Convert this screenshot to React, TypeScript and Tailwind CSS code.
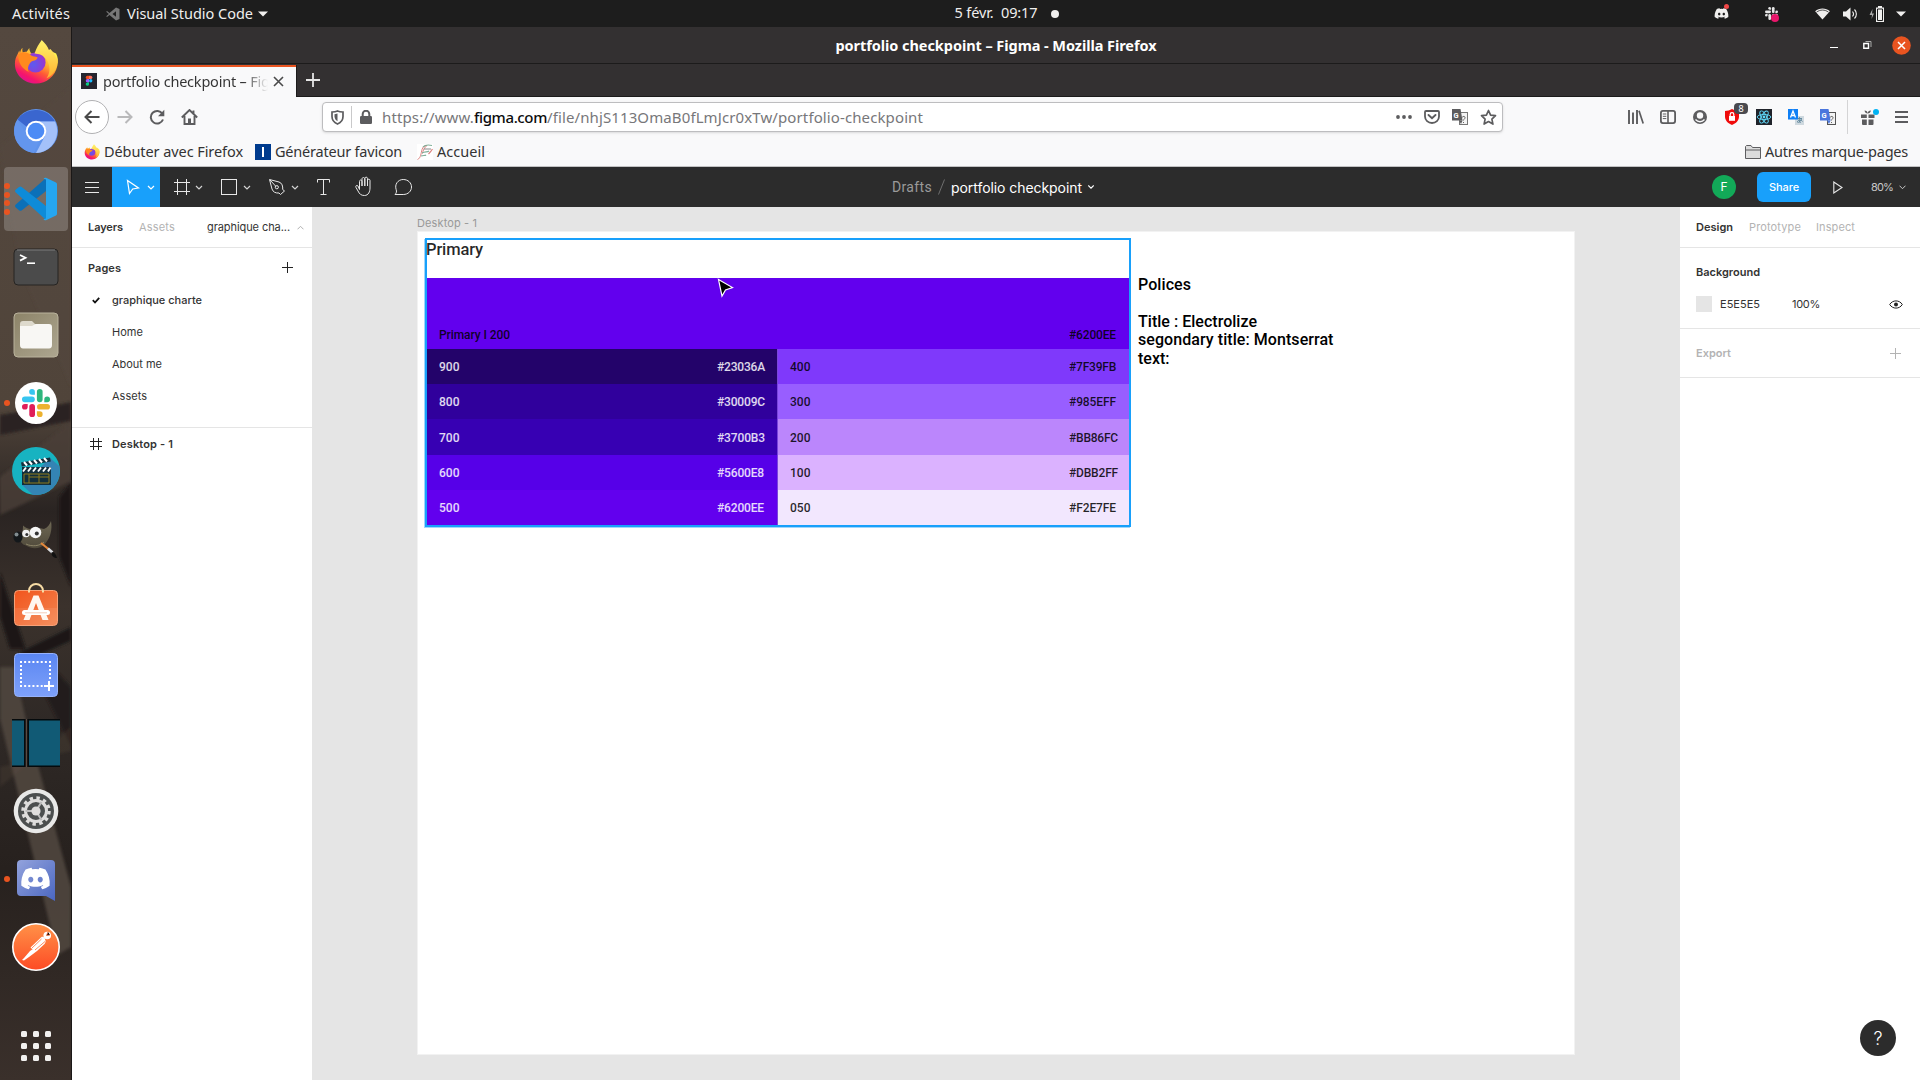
import { useLayoutEffect, useRef, useState } from "react";
import type { ReactNode } from "react";
import { FaDiscord } from "react-icons/fa";

/* Single line of text whose tracking is adjusted so that it spans a given width. */
function Fit({ w, className = "", children }: { w: number; className?: string; children: string }) {
  const ref = useRef<HTMLSpanElement>(null);
  const [spacing, setSpacing] = useState(0);
  useLayoutEffect(() => {
    if (ref.current) {
      const natural = ref.current.getBoundingClientRect().width;
      setSpacing((w - natural) / children.length);
    }
  }, [w, children]);
  return (
    <span ref={ref} className={`inline-block shrink-0 whitespace-pre ${className}`} style={{ letterSpacing: spacing }}>
      {children}
    </span>
  );
}

function Cell({ className = "", children }: { className?: string; children?: ReactNode }) {
  return <div className={`flex shrink-0 items-center justify-center ${className}`}>{children}</div>;
}

/* ---------- Dock icons ---------- */

function FirefoxIcon({ size, id }: { size: number; id: string }) {
  return (
    <svg width={size} height={size} viewBox="0 0 48 48">
      <defs>
        <linearGradient id={`${id}a`} x1="0.8" y1="0.1" x2="0.25" y2="0.95">
          <stop offset="0" stopColor="#fff44f" />
          <stop offset="0.35" stopColor="#ffb02e" />
          <stop offset="0.6" stopColor="#ff5a36" />
          <stop offset="0.85" stopColor="#f5156c" />
          <stop offset="1" stopColor="#e0128d" />
        </linearGradient>
        <radialGradient id={`${id}b`} cx="0.4" cy="0.6" r="0.6">
          <stop offset="0" stopColor="#5b5bf0" />
          <stop offset="1" stopColor="#9a35cf" />
        </radialGradient>
        <linearGradient id={`${id}c`} x1="0" y1="0" x2="0" y2="1">
          <stop offset="0" stopColor="#fff36b" />
          <stop offset="1" stopColor="#ffb22f" />
        </linearGradient>
      </defs>
      <path d="M10 9c-.5 2-.3 3.500 .3 5 1-.6 2.500-.8 4-.6L17 9.500c0 2 .8 4 2 5.500L38 12l7 3c2 4 2.500 8 1.300 13C44 39 35 46.500 24 46.500S2 38.500 2 26c0-4 1-7 3-10.500L6.500 12l.8 2.500C7.800 12 8.500 10.500 10 9Z" fill={`url(#${id}a)`} />
      <circle cx="23.500" cy="24.500" r="10.500" fill={`url(#${id}b)`} />
      <path d="M30 1c3.500 3.500 6 6.500 7.500 10.500l1.500-1c3 3 5 6 6 10.500l1-.8C47 30 42.500 38 35 41c3.500-5 4-10.500 1.500-17-1.300-3.500-5-7-9-8l-5-1c2-6 4.500-10 7.500-14Z" fill={`url(#${id}c)`} />
      <path d="M5.500 16c5-3.500 10-2.500 14 1.500 1.500 1 4 .8 6 1.500.3 2-2.500 3.500-5 4-1 0-2 1-3 2.500-2 2.500-2.500 6-1 9C9 31 5 24 5.500 16Z" fill="#ff8a1e" />
    </svg>
  );
}

function ChromiumIcon() {
  return (
    <svg width="44" height="44" viewBox="0 0 44 44">
      <circle cx="22" cy="22" r="22" fill="#5f93ec" />
      <path d="M3.500 10.500A22 22 0 0 1 41 12.500H22a10 10 0 0 0-9 5.500Z" fill="#3a66cf" />
      <path d="M22 12.500h19A22 22 0 0 1 22 44l9-17a10 10 0 0 0-9-14.500Z" fill="#a4c1f9" />
      <path d="m3.500 10.500 9.800 16.500A10 10 0 0 0 22 32l3.500-.5L20 44A22 22 0 0 1 3.500 10.500Z" fill="#6396ee" />
      <circle cx="22" cy="22" r="10.300" fill="#fff" />
      <circle cx="22" cy="22" r="8.300" fill="#4c8bf5" />
    </svg>
  );
}

function VSCodeIcon() {
  return (
    <svg width="44" height="44" viewBox="0 0 44 44">
      <path d="M32 1 1.800 27.500c-1 .9-1 2 0 2.900L5 33.300c.8.700 1.800.7 2.600.1L32 14Z" fill="#0b70b8" />
      <path d="M32 43 1.800 15.500c-1-.9-1-2 0-2.900L5 10c.8-.7 1.800-.7 2.600 0L32 29Z" fill="#0e8bd8" />
      <path d="M32 .8 42 5.500c.7.400 1 .9 1 1.700v29.600c0 .8-.3 1.300-1 1.700L32 43.200c-1 .3-2-.2-2.500-1l2.500-.7V2.500L29.500 1.800c.5-.8 1.500-1.300 2.500-1Z" fill="#25a6f0" />
    </svg>
  );
}

function TerminalIcon() {
  return (
    <svg width="46" height="38" viewBox="0 0 46 38">
      <rect x="1" y="1" width="44" height="36" rx="4" fill="#4b4b4b" stroke="#262422" />
      <path d="M4 2h38" stroke="#7d7d7d" />
      <path d="m7 7 5.500 2.800L7 12.600" fill="none" stroke="#fff" strokeWidth="1.800" />
      <path d="M14 15.200h8" stroke="#fff" strokeWidth="1.600" />
    </svg>
  );
}

function FilesIcon() {
  return (
    <svg width="46" height="46" viewBox="0 0 46 46">
      <defs>
        <linearGradient id="fil" x1="0" y1="0" x2="1" y2="1">
          <stop offset="0" stopColor="#8c8368" />
          <stop offset="1" stopColor="#ada690" />
        </linearGradient>
      </defs>
      <rect x="1" y="1" width="44" height="44" rx="4" fill="url(#fil)" stroke="#b9b29c" />
      <path d="M7 12c0-2 1-3 3-3h9l4 4h10v10H7Z" fill="#dedacd" />
      <path d="M7 14h12l3.500-2H36c2 0 3 1 3 3v18c0 2-1 3.500-3 3.500H10c-2 0-3-1.500-3-3.500Z" fill="#f8f7f4" />
    </svg>
  );
}

function SlackMark({ size, colors }: { size: number; colors: [string, string, string, string] }) {
  const [b, g, y, r] = colors;
  return (
    <svg width={size} height={size} viewBox="0 0 28 28">
      <g fill={b}>
        <rect x="0" y="7.500" width="12.800" height="5.700" rx="2.850" />
        <path d="M10 0a2.850 2.850 0 0 1 2.850 2.850V5.700H10A2.850 2.850 0 0 1 10 0Z" />
      </g>
      <g fill={g}>
        <rect x="14.900" y="0" width="5.700" height="13.200" rx="2.850" />
        <path d="M28 10.300a2.850 2.850 0 0 1-2.850 2.900H22.300v-2.900a2.850 2.850 0 0 1 5.700 0Z" />
      </g>
      <g fill={y}>
        <rect x="15" y="14.900" width="13" height="5.700" rx="2.850" />
        <path d="M17.800 28a2.850 2.850 0 0 1-2.900-2.850V22.300h2.900a2.850 2.850 0 0 1 0 5.700Z" />
      </g>
      <g fill={r}>
        <rect x="7.300" y="14.900" width="5.700" height="13.100" rx="2.850" />
        <path d="M0 17.750a2.850 2.850 0 0 1 2.850-2.850H5.700v2.850a2.850 2.850 0 0 1-5.700 0Z" />
      </g>
    </svg>
  );
}

function ClapperIcon() {
  return (
    <svg width="48" height="48" viewBox="0 0 48 48">
      <circle cx="24" cy="24" r="24" fill="#17b3c1" />
      <path d="M38 11 47.300 19a24 24 0 0 1-26.500 28.800L10 38Z" fill="#3484b4" />
      <path d="m9 15.500 29-5 .8 4-29 5Z" fill="#132f3d" />
      <path d="m12 15 3 3.500m2-4.500 3 3.500m2-4.500 3 3.500m2-4.500 3 3.500m2-4.500 3 3.500" stroke="#fff" strokeWidth="2" />
      <rect x="10" y="20" width="29" height="18" fill="#132f3d" />
      <path d="m11 24.500 3-4m2 4 3-4m2 4 3-4m2 4 3-4m2 4 3-4m2 4 2.500-4" stroke="#fff" strokeWidth="1.900" />
      <path d="M12 27h25v9H12ZM17 27v9M27 27v9M17 30h20" fill="none" stroke="#8d7a1d" />
    </svg>
  );
}

function GimpIcon() {
  return (
    <svg width="46" height="40" viewBox="0 0 46 40">
      <defs>
        <linearGradient id="gmp" x1="0" y1="0" x2="0" y2="1">
          <stop offset="0" stopColor="#6e6854" />
          <stop offset="1" stopColor="#504a3b" />
        </linearGradient>
      </defs>
      <path d="M10 6.500c2 2 4 3 7 3.500 5-1.500 10-1 14 0 3.500-1.500 5.500-4 7-8 1.500 8-.5 17-6 23-5 5.500-14 5-19 1.500-4-1-6-4-6-8 2-2 3-7 3-12Z" fill="url(#gmp)" />
      <path d="M13 25c6 3 14 2 18-2" fill="none" stroke="#8c8468" strokeWidth="1" />
      <ellipse cx="5" cy="18" rx="4.600" ry="5.600" fill="#14181b" />
      <ellipse cx="3.500" cy="15.500" rx="2" ry="2" fill="#828c90" />
      <circle cx="13" cy="14.500" r="3.800" fill="#f0f0f0" />
      <circle cx="22.500" cy="13.500" r="5.800" fill="#f6f6f6" />
      <circle cx="13.800" cy="15.500" r="1.500" fill="#333" />
      <circle cx="23.800" cy="14.500" r="2" fill="#333" />
      <path d="m28 24 8 6.500" stroke="#e3883c" strokeWidth="2.200" />
      <path d="m35 29.500 4.500 4" stroke="#d9dcdf" strokeWidth="2.600" />
      <path d="M38.500 33.500c2-1 4.500 1 5.500 5.500-3 0-6-2-5.500-5.500Z" fill="#111" />
    </svg>
  );
}

function SoftwareIcon() {
  return (
    <svg width="46" height="44" viewBox="0 0 46 44">
      <defs>
        <linearGradient id="sfw" x1="0" y1="0" x2="1" y2="1">
          <stop offset="0" stopColor="#f2551d" />
          <stop offset="1" stopColor="#f28550" />
        </linearGradient>
      </defs>
      <rect x="1.500" y="7.500" width="43" height="35" rx="4" fill="url(#sfw)" stroke="#f7a077" />
      <path d="M2 25h42v14a3 3 0 0 1-3 3H5a3 3 0 0 1-3-3Z" fill="#fff" opacity="0.08" />
      <path d="M16 9.500V8a7 7 0 0 1 14 0v1.500" fill="none" stroke="#f6dba4" strokeWidth="2" />
      <path d="M20.500 12.500h5l10 24.500h-6l-6.500-17-6.500 17h-6Z" fill="#fff6ef" />
      <rect x="9" y="27" width="28" height="5" rx="2.500" fill="#fff" />
      <path d="M12 29.800h22" stroke="#e9a88a" strokeWidth="0.600" />
    </svg>
  );
}

function ScreenshotIcon() {
  return (
    <svg width="46" height="46" viewBox="0 0 46 46">
      <defs>
        <linearGradient id="scr" x1="0" y1="0" x2="0" y2="1">
          <stop offset="0" stopColor="#5a86f2" />
          <stop offset="1" stopColor="#7ea1fa" />
        </linearGradient>
      </defs>
      <rect x="1.500" y="1.500" width="43" height="43" rx="4" fill="url(#scr)" stroke="#96b2fb" />
      <path d="M7 10h31M7 34h23" stroke="#fff" strokeWidth="2" strokeDasharray="2 2.140" />
      <path d="M8 13v20M37 13v16" stroke="#fff" strokeWidth="2" strokeDasharray="2 2" />
      <path d="M36 29v10M31 34h10" stroke="#fff" strokeWidth="2" />
    </svg>
  );
}

function WindowsIcon() {
  return (
    <svg width="48" height="48" viewBox="0 0 48 48">
      <rect width="48" height="48" fill="#050a0c" />
      <rect x="0" y="1.500" width="12" height="45" fill="#115a75" />
      <rect x="13.700" width="1.500" height="48" fill="#5b4a42" />
      <rect x="17" y="1.500" width="31" height="45" fill="#115a75" />
    </svg>
  );
}

function SettingsIcon() {
  return (
    <svg width="46" height="46" viewBox="0 0 46 46">
      <circle cx="23" cy="23" r="22.300" fill="#e9e9e8" />
      <circle cx="23" cy="23" r="18" fill="#4c4f4f" />
      <circle cx="23" cy="23" r="13" fill="none" stroke="#dedddc" strokeWidth="3.500" strokeDasharray="3.400 3.407" />
      <circle cx="23" cy="23" r="10.500" fill="none" stroke="#dedddc" strokeWidth="3" />
      <path d="M12.500 23H23m0 0 5.500-9M23 23l5.500 9" stroke="#bbb" strokeWidth="2" />
      <circle cx="23" cy="23" r="4.600" fill="#dedddc" />
    </svg>
  );
}

function DiscordDockIcon() {
  return (
    <div className="relative flex h-[42px] w-[38px] justify-center">
      <svg className="absolute inset-0" width="38" height="42" viewBox="0 0 38 42">
        <defs>
          <linearGradient id="dsc" x1="0" y1="0" x2="1" y2="1">
            <stop offset="0" stopColor="#93a3dd" />
            <stop offset="1" stopColor="#4a66c0" />
          </linearGradient>
        </defs>
        <path d="M4 0h30a4 4 0 0 1 4 4v37l-9-5H4a4 4 0 0 1-4-4V4a4 4 0 0 1 4-4Z" fill="url(#dsc)" />
      </svg>
      <FaDiscord className="relative mt-[3px] h-[31px] w-[31px] text-white" />
    </div>
  );
}

function PostmanIcon() {
  return (
    <svg width="48" height="48" viewBox="0 0 48 48">
      <defs>
        <linearGradient id="pst" x1="0" y1="0" x2="0" y2="1">
          <stop offset="0" stopColor="#ff9248" />
          <stop offset="1" stopColor="#fd4b25" />
        </linearGradient>
      </defs>
      <circle cx="24" cy="24" r="23.200" fill="url(#pst)" stroke="#fff" strokeWidth="1.600" />
      <circle cx="35.200" cy="12.500" r="3.800" fill="#fff" />
      <path d="m18.500 24.500 11-10.500c1.500-1 4 1 3.500 3L22 27.500Z" fill="#fff" />
      <path d="M33 16.500c1 1 .8 3-.5 4.500L25 28l-8 6-5 3.500-2-.5 2-2 6-7 6-4Z" fill="#fff" />
      <path d="m20 25 9.500-9M23 27l10-8.500M36 9l-1.500 3.500 3.500-.5" stroke="#fd7038" strokeWidth="0.800" />
    </svg>
  );
}

function Dots({ n }: { n: number }) {
  return (
    <div className="absolute left-1 top-1/2 flex -translate-y-1/2 flex-col gap-[2.700px]">
      {Array.from({ length: n }, (_, i) => (
        <div key={i} className="h-1.5 w-1.5 rounded-full bg-[#e95420]" />
      ))}
    </div>
  );
}

function Wallpaper() {
  return (
    <svg className="absolute inset-0 h-full w-full" viewBox="0 0 72 1053" preserveAspectRatio="none">
      <defs>
        <linearGradient id="wall" x1="0" y1="0" x2="0" y2="1">
          <stop offset="0" stopColor="#54483f" />
          <stop offset="0.360" stopColor="#50443a" />
          <stop offset="0.460" stopColor="#2a2422" />
          <stop offset="0.550" stopColor="#3b322c" />
          <stop offset="0.660" stopColor="#2f2926" />
          <stop offset="0.800" stopColor="#27211e" />
          <stop offset="1" stopColor="#3a302b" />
        </linearGradient>
        <filter id="soft">
          <feGaussianBlur stdDeviation="1.500" />
        </filter>
      </defs>
      <rect width="72" height="1053" fill="url(#wall)" />
      <g filter="url(#soft)">
        <path d="M0 120 72 60v300L20 240Z" fill="#57493f" opacity="0.300" />
        <path d="M72 375 48 380 0 388v20l72-14Z" fill="#2a2421" />
        <path d="M72 395 0 450v38l72-34Z" fill="#4b3f37" opacity="0.800" />
        <path d="M72 455 60 470v60l12 30Z" fill="#1d1918" />
        <path d="M0 545 26 622H10L0 590Z" fill="#1c1817" />
        <path d="M20 625 72 600v14L22 636Z" fill="#1d1917" />
        <path d="M30 636 72 720v-60L44 630Z" fill="#221d1b" />
        <path d="M0 640v52l58 236 14-8v-60L28 700 14 640Z" fill="#50453f" opacity="0.900" />
        <path d="M0 760 72 700v24L0 740Z" fill="#5a4b41" opacity="0.250" />
      </g>
    </svg>
  );
}

function Dock() {
  return (
    <aside className="relative h-full w-[72px] shrink-0 overflow-hidden border-r border-[#1b1817] bg-[#4a3f38]">
      <Wallpaper />
      <div className="relative flex flex-col pt-px">
        <Cell className="h-[68px]"><FirefoxIcon size={46} id="ffd" /></Cell>
        <Cell className="mt-px h-[68px]"><ChromiumIcon /></Cell>
        <Cell className="relative h-[68px]">
          <div className="absolute left-1 top-0.5 h-16 w-16 rounded bg-white/20" />
          <div className="relative"><VSCodeIcon /></div>
          <Dots n={4} />
        </Cell>
        <Cell className="h-[68px]"><TerminalIcon /></Cell>
        <Cell className="h-[68px]"><FilesIcon /></Cell>
        <Cell className="relative h-[68px]">
          <div className="flex h-[42px] w-[42px] items-center justify-center rounded-full bg-white">
            <SlackMark size={28} colors={["#36c5f0", "#2eb67d", "#ecb22e", "#e01e5a"]} />
          </div>
          <Dots n={1} />
        </Cell>
        <Cell className="h-[68px]"><ClapperIcon /></Cell>
        <Cell className="h-[68px]"><GimpIcon /></Cell>
        <Cell className="h-[66px] pb-0.5"><SoftwareIcon /></Cell>
        <Cell className="h-[70px] pt-0.5"><ScreenshotIcon /></Cell>
        <Cell className="h-[68px]"><WindowsIcon /></Cell>
        <Cell className="h-[68px]"><SettingsIcon /></Cell>
        <Cell className="relative h-[68px] pt-1"><DiscordDockIcon /><Dots n={1} /></Cell>
        <Cell className="h-[68px]"><PostmanIcon /></Cell>
        <div className="mt-[50px] grid grid-cols-3 gap-1.5 self-center">
          {Array.from({ length: 9 }, (_, i) => (
            <div key={i} className="h-1.5 w-1.5 rounded-[1.500px] bg-[#f2f1f0]" />
          ))}
        </div>
      </div>
    </aside>
  );
}

/* ---------- System bar ---------- */

function SystemBar() {
  return (
    <header className="grid h-[27px] shrink-0 grid-cols-[1fr_auto_1fr] items-center bg-[#1d1d1d] text-[14.500px] leading-none text-[#f0efee]">
      <div className="flex items-center pl-3">
        <Fit w={58}>Activités</Fit>
        <svg className="ml-9" width="14" height="14" viewBox="0 0 14 14">
          <path d="M10 .5 13.500 2v10L10 13.500 3.500 8 1 10 .2 9.300 2.800 7 .2 4.700 1 4l2.500 2Z" fill="#777" />
          <path d="M10 4.200v5.600L6.500 7Z" fill="#1d1d1d" />
        </svg>
        <Fit w={126} className="ml-[7px]">Visual Studio Code</Fit>
        <svg className="ml-[5px]" width="10" height="6" viewBox="0 0 10 6"><path d="M0 .5h10L5 5.500Z" fill="#f0efee" /></svg>
      </div>
      <div className="flex items-center pl-[98px]">
        <Fit w={83} className="relative -top-px">{"5 févr.  09:17"}</Fit>
        <div className="ml-[13px] h-2 w-2 rounded-full bg-[#f0efee]" />
        <div className="w-[5px]" />
      </div>
      <div className="flex items-center justify-end pr-[9px]">
        <Cell className="relative w-4">
          <FaDiscord className="h-[15px] w-[15px]" />
          <div className="absolute -top-0.5 right-0 h-[5px] w-[5px] rounded-full bg-[#f04747]" />
        </Cell>
        <Cell className="relative ml-[34px] w-4">
          <SlackMark size={13} colors={["#e8e8e8", "#e8e8e8", "#e8e8e8", "#e8e8e8"]} />
          <div className="absolute -bottom-0.5 right-0 h-2 w-2 rounded-full bg-[#e8176b]" />
        </Cell>
        <Cell className="ml-[35px] w-4">
          <svg width="15" height="12" viewBox="0 0 16 13">
            <path d="M0 3.500C4.500-.5 11.500-.5 16 3.500l-8 9Z" fill="#f0efee" />
            <path d="M1.500 4.500c4-3 9-3 13 0" fill="none" stroke="#1d1d1d" strokeWidth="0.800" />
          </svg>
        </Cell>
        <Cell className="ml-3 w-4">
          <svg width="15" height="14" viewBox="0 0 15 14">
            <path d="M0 4.500h3L7.500.5v13L3 9.500H0Z" fill="#f0efee" />
            <path d="M9.500 4.500c1.300 1.500 1.300 3.500 0 5M11.500 2.500c2.500 2.500 2.500 6.500 0 9" fill="none" stroke="#f0efee" strokeWidth="1.100" />
          </svg>
        </Cell>
        <Cell className="ml-[11px] w-4">
          <svg width="16" height="16" viewBox="0 0 16 16">
            <path d="m3.500 3-3 6H3l-.5 4L5 7.500H3Z" fill="#aaa" />
            <path d="M9 0h4v1.500h2V16H7V1.500h2Z" fill="#f0efee" />
            <path d="M8.500 3v11.500h5V3Z" fill="#f0efee" stroke="#1d1d1d" />
          </svg>
        </Cell>
        <Cell className="ml-1.5 w-5">
          <svg width="10" height="6" viewBox="0 0 10 6"><path d="M0 .5h10L5 5.500Z" fill="#f0efee" /></svg>
        </Cell>
      </div>
    </header>
  );
}

/* ---------- Browser chrome ---------- */

function TitleBar() {
  return (
    <div className="relative flex h-[37px] shrink-0 items-center justify-center border-b border-[#1c1b1b] bg-[#333031]">
      <Fit w={321} className="text-[14.500px] font-bold leading-none text-white">portfolio checkpoint – Figma - Mozilla Firefox</Fit>
      <div className="absolute right-[9px] flex items-center">
        <svg width="8" height="20" viewBox="0 0 8 20"><path d="M0 12.500h8" stroke="#fff" /></svg>
        <svg className="ml-[25px]" width="9" height="9" viewBox="0 0 9 9">
          <path d="M.8 2.500h4.700v4.700H.8Z" fill="none" stroke="#fff" strokeWidth="1.400" />
          <path d="M2.500.5h5.500v5.500" fill="none" stroke="#aaa" />
        </svg>
        <svg className="ml-[20px]" width="19" height="19" viewBox="0 0 19 19">
          <circle cx="9.500" cy="9.500" r="9.300" fill="#e95420" />
          <path d="m6 6 7 7m0-7-7 7" stroke="#fff" strokeWidth="1.500" />
        </svg>
      </div>
    </div>
  );
}

function FigmaFavicon() {
  return (
    <svg width="16" height="16" viewBox="0 0 16 16">
      <rect width="16" height="16" fill="#25252f" />
      <path d="M8 2.800H6.400a1.600 1.600 0 0 0 0 3.300H8Z" fill="#f24e1e" />
      <path d="M8 2.800h1.700a1.600 1.600 0 0 1 0 3.300H8Z" fill="#ff7262" />
      <path d="M8 6.100H6.400a1.600 1.600 0 0 0 0 3.300H8Z" fill="#a259ff" />
      <circle cx="9.700" cy="7.800" r="1.700" fill="#1abcfe" />
      <path d="M8 9.500H6.400A1.650 1.650 0 1 0 8 11.200Z" fill="#0acf83" />
    </svg>
  );
}

function TabStrip() {
  return (
    <div className="flex h-[33px] shrink-0 border-b border-[#1c1b1b] bg-[#333031] pt-px">
      <div className="-mb-px flex w-[224px] items-center border-t-2 border-[#e95420] bg-[#f9f9fa] pb-[2px] pl-[9px]">
        <FigmaFavicon />
        <div className="ml-1.5 w-[165px] overflow-hidden bg-gradient-to-r from-[#333] from-85% to-transparent bg-clip-text text-[14.500px] leading-5 text-transparent">
          <Fit w={188}>portfolio checkpoint – Figma</Fit>
        </div>
        <svg className="ml-[5px]" width="11" height="11" viewBox="0 0 11 11">
          <path d="m1 1 9 9m0-9-9 9" stroke="#4a4a4a" strokeWidth="1.600" />
        </svg>
      </div>
      <Cell className="w-[33px] border-l border-[#1c1b1b] pb-0.5">
        <svg width="14" height="14" viewBox="0 0 14 14"><path d="M7 0v14M0 7h14" stroke="#e6e6e6" strokeWidth="1.800" /></svg>
      </Cell>
    </div>
  );
}

function Translate({ color, edge }: { color: string; edge: string }) {
  return (
    <svg width="16" height="16" viewBox="0 0 16 16">
      <rect x="7.500" y="3.500" width="8" height="12" fill="#f4f4f4" stroke={edge} />
      <path d="M10 8.500c.5-1.500 3.500-1.500 3 .5-.3 1.200-1.500 1.200-1.500 2.500M11.500 13v1" fill="none" stroke="#666" />
      <path d="M0 0h8.500l2 11.500H0Z" fill={color} />
      <text x="1.600" y="8.500" fontSize="7.500" fontWeight="700" fontFamily="Roboto, sans-serif" fill="#fff">G</text>
      <path d="M7 11.500h3.500L9 15Z" fill={color} />
    </svg>
  );
}

function NavBar() {
  return (
    <div className="flex h-[40px] shrink-0 items-center pl-[3px] text-[#5c5c5e]">
      <Cell className="h-[34px] w-[34px] rounded-full border border-[#b1b1b3] bg-white">
        <svg width="16" height="14" viewBox="0 0 16 14"><path d="M15.500 7H1.500M7.500 1l-6 6 6 6" fill="none" stroke="#4a4a4a" strokeWidth="2" /></svg>
      </Cell>
      <Cell className="w-8">
        <svg width="16" height="14" viewBox="0 0 16 14"><path d="M.5 7h14M8.500 1l6 6-6 6" fill="none" stroke="#b9b9ba" strokeWidth="2" /></svg>
      </Cell>
      <Cell className="w-8">
        <svg width="16" height="16" viewBox="0 0 16 16">
          <path d="M13.400 4.800A6.300 6.300 0 1 0 14 10.500" fill="none" stroke="#5c5c5e" strokeWidth="2" />
          <path d="M15.300.8v6.400H9Z" fill="#5c5c5e" />
        </svg>
      </Cell>
      <Cell className="w-8">
        <svg width="17" height="16" viewBox="0 0 17 16">
          <path d="M.8 8.500 8.500 1l7.700 7.500M3.500 7v8h10V7M12.500 1.500v4" fill="none" stroke="#5c5c5e" strokeWidth="1.900" />
          <path d="M7 15V9.500h3V15Z" fill="#5c5c5e" />
        </svg>
      </Cell>
      <div className="ml-[117px] flex h-[30px] w-[1181px] items-center rounded border border-[#bdbdbf] bg-white shadow-sm">
        <Cell className="w-[28px]">
          <svg width="13" height="15" viewBox="0 0 13 15">
            <path d="M1 2c2 0 4-.3 5.500-1 1.500.7 3.500 1 5.500 1v4.500c0 3.500-2 6-5.500 7.500C3 12.500 1 10 1 6.500Z" fill="none" stroke="#5c5c5e" strokeWidth="1.700" />
            <path d="M6.500 3.500v7.800c-2-1.200-3-2.800-3-5V4.200Z" fill="#5c5c5e" />
          </svg>
        </Cell>
        <div className="h-[22px] w-px bg-[#c9c9ca]" />
        <Cell className="w-[28px]">
          <svg width="12" height="14" viewBox="0 0 12 14">
            <rect y="6" width="12" height="8" rx="1.200" fill="#5c5c5e" />
            <path d="M2.700 7V4a3.300 3.300 0 0 1 6.600 0v3" fill="none" stroke="#5c5c5e" strokeWidth="2" />
          </svg>
        </Cell>
        <div className="ml-0.5 flex text-[15px] leading-none text-[#77777a]">
          <Fit w={92}>https://www.</Fit>
          <Fit w={73} className="font-medium text-[#0c0c0d]">figma.com</Fit>
          <Fit w={376}>/file/nhjS113OmaB0fLmJcr0xTw/portfolio-checkpoint</Fit>
        </div>
        <div className="ml-auto flex">
          <Cell className="w-7"><svg width="16" height="4" viewBox="0 0 16 4"><circle cx="2" cy="2" r="1.900" fill="#5c5c5e" /><circle cx="8" cy="2" r="1.900" fill="#5c5c5e" /><circle cx="14" cy="2" r="1.900" fill="#5c5c5e" /></svg></Cell>
          <Cell className="w-7">
            <svg width="16" height="14" viewBox="0 0 16 14">
              <path d="M2 1h12a1 1 0 0 1 1 1v4.500a7 6.500 0 0 1-14 0V2a1 1 0 0 1 1-1Z" fill="none" stroke="#5c5c5e" strokeWidth="1.800" />
              <path d="M4.500 5 8 8.200 11.500 5" fill="none" stroke="#5c5c5e" strokeWidth="1.900" strokeLinecap="round" />
            </svg>
          </Cell>
          <Cell className="w-7"><Translate color="#5c5c5e" edge="#777" /></Cell>
          <Cell className="w-7">
            <svg width="17" height="17" viewBox="0 0 17 17">
              <path d="m8.500 1.500 2.100 4.600 4.900.6-3.600 3.400 1 5-4.400-2.500-4.400 2.500 1-5L1.500 6.700l4.900-.6Z" fill="none" stroke="#5c5c5e" strokeWidth="1.700" strokeLinejoin="round" />
            </svg>
          </Cell>
        </div>
      </div>
      <Cell className="ml-[117px] w-8">
        <svg width="16" height="14" viewBox="0 0 16 14">
          <path d="M1 0v14M5 2.500V14M9 0v14" stroke="#5c5c5e" strokeWidth="1.900" />
          <path d="m11 .8 4.200 12.700" stroke="#5c5c5e" strokeWidth="1.700" />
        </svg>
      </Cell>
      <Cell className="w-8">
        <svg width="16" height="14" viewBox="0 0 16 14">
          <rect x="0.900" y="0.900" width="14.200" height="12.200" rx="2" fill="none" stroke="#5c5c5e" strokeWidth="1.800" />
          <path d="M8 1v12" stroke="#5c5c5e" strokeWidth="1.600" />
          <path d="M2.800 4h3.500M2.800 6.300h3.500M2.800 8.600h3.500" stroke="#5c5c5e" />
        </svg>
      </Cell>
      <Cell className="w-8">
        <svg width="14" height="14" viewBox="0 0 14 14">
          <circle cx="7" cy="7" r="7" fill="#5c5c5e" />
          <circle cx="7" cy="5.500" r="3.200" fill="#f9f9fa" />
          <path d="M2.500 9.500c2.500 3 6.500 3 9 0" fill="none" stroke="#f9f9fa" strokeWidth="1.300" />
        </svg>
      </Cell>
      <Cell className="relative w-8">
        <svg width="14" height="16" viewBox="0 0 14 16">
          <path d="M7 0c2 1.300 4.500 2 7 2v5.500c0 4-3 7-7 8.500-4-1.500-7-4.500-7-8.500V2c2.500 0 5-.7 7-2Z" fill="#f00b0b" />
          <rect x="4" y="7" width="6" height="4.800" fill="#fff" />
          <path d="M5.200 7V5.500a1.800 1.800 0 0 1 3.600 0V7" fill="none" stroke="#fff" strokeWidth="1.200" />
        </svg>
        <div className="absolute left-[18px] top-[-6px] flex h-[11px] w-[14px] items-center justify-center rounded-sm bg-[#4a4a4f] text-[9px] leading-none text-white">8</div>
      </Cell>
      <Cell className="w-8">
        <svg width="16" height="16" viewBox="0 0 16 16">
          <rect width="16" height="16" fill="#20232a" />
          <g fill="none" stroke="#61dafb" strokeWidth="0.900">
            <ellipse cx="8" cy="8" rx="6.800" ry="2.600" />
            <ellipse cx="8" cy="8" rx="6.800" ry="2.600" transform="rotate(60 8 8)" />
            <ellipse cx="8" cy="8" rx="6.800" ry="2.600" transform="rotate(120 8 8)" />
          </g>
          <circle cx="8" cy="8" r="1.400" fill="#61dafb" />
        </svg>
      </Cell>
      <Cell className="w-8">
        <svg width="16" height="16" viewBox="0 0 16 16">
          <rect x="7" y="7" width="9" height="9" fill="#cfd9df" />
          <path d="M9 9.500h5M11.500 8c-1 3 0 4.500 1 6M13.500 10c-1.500 4-4.500 4-4 2.500s4-2 5 0" fill="none" stroke="#5a8298" strokeWidth="0.900" />
          <rect width="10" height="10.500" fill="#0f7ff5" />
          <path d="M2.500 8.500 5 2l2.500 6.500M3.500 6.500h3" fill="none" stroke="#fff" strokeWidth="1.300" />
        </svg>
      </Cell>
      <Cell className="w-8"><Translate color="#4a76dd" edge="#555" /></Cell>
      <div className="ml-[3px] h-[34px] w-px bg-[#d4d4d5]" />
      <Cell className="ml-[6px] w-8">
        <svg width="18" height="17" viewBox="0 0 18 17">
          <path d="M0 5.500h5.800V9H0ZM7.500 5.500h6V9h-6ZM1 10.500h4.800V16H2a1 1 0 0 1-1-1ZM7.500 10.500h5V15a1 1 0 0 1-1 1h-4Z" fill="#5c5c5e" />
          <path d="M3.500 1.500c2 0 3 1 3.200 3 .2-2 1-3 3.200-3-.3 1.800-1.500 3-3.200 3s-2.900-1.200-3.200-3Z" fill="#5c5c5e" />
          <circle cx="15" cy="3" r="3" fill="#00b3f4" />
        </svg>
      </Cell>
      <Cell className="-ml-px w-8">
        <svg width="13" height="12" viewBox="0 0 13 12"><path d="M0 1h13M0 6h13M0 11h13" stroke="#5c5c5e" strokeWidth="1.900" /></svg>
      </Cell>
    </div>
  );
}

function BookmarksBar() {
  return (
    <div className="flex h-[29px] shrink-0 items-center pl-3 pr-3 text-[14.500px] leading-none text-[#333]">
      <FirefoxIcon size={16} id="ffb" />
      <Fit w={139} className="ml-1">Débuter avec Firefox</Fit>
      <Cell className="ml-3 h-4 w-4 bg-[#003b8e]"><div className="h-2.5 w-[2.500px] bg-white" /></Cell>
      <Fit w={127} className="ml-1">Générateur favicon</Fit>
      <svg className="ml-[15px]" width="16" height="16" viewBox="0 0 16 16">
        <rect width="16" height="16" fill="#fff" />
        <path d="M.5 15.500C4 14 4 9 5 5.500 6 2.500 8 1 10 1.500c-3 2-4 5-4.500 8" fill="none" stroke="#de8482" />
        <path d="M6 3c3-3 7-2 9-1.500M5 9c3-2 5-.5 7-2M4 12c2-1 4 0 5-1" fill="none" stroke="#7fae98" strokeWidth="1.200" />
        <path d="M7 5h7" stroke="#888" />
        <path d="M11.500 10c1-1 2.500-2.500 4-5" stroke="#de8482" strokeWidth="1.200" />
      </svg>
      <Fit w={48} className="ml-1">Accueil</Fit>
      <svg className="ml-auto" width="16" height="14" viewBox="0 0 16 14">
        <path d="M.5 13.500v-12L1.500.5H6l1.500 2h8v11Z" fill="#dcdcdc" stroke="#5e5e60" />
        <path d="M.5 5h15" stroke="#5e5e60" />
      </svg>
      <Fit w={143} className="ml-[4px]">Autres marque-pages</Fit>
    </div>
  );
}

/* ---------- Figma ---------- */

const stroke = { fill: "none", stroke: "#e8e8e8", strokeWidth: 1 } as const;

function Chevron() {
  return <path d="m36 19 3 3 3-3" fill="none" stroke="#d4d4d4" strokeWidth="1.200" />;
}

function FigmaToolbar() {
  return (
    <div className="relative flex h-10 shrink-0 items-center bg-[#2c2c2c]">
      <Cell className="h-10 w-10">
        <svg width="14" height="11" viewBox="0 0 14 11"><path d="M0 .5h14M0 5.500h14M0 10.500h14" stroke="#e8e8e8" /></svg>
      </Cell>
      <div className="h-10 w-12 bg-[#18a0fb]">
        <svg width="48" height="40"><path d="m15.500 13.500 11 7.500-5.800 1-3.200 4.500Z" {...stroke} stroke="#fff" strokeWidth={1.200} /><path d="m36 19 3 3 3-3" fill="none" stroke="#fff" strokeWidth="1.200" /></svg>
      </div>
      <svg width="48" height="40"><path d="M17.500 12v16M26.500 12v16M14 15.500h16M14 24.500h16" {...stroke} /><Chevron /></svg>
      <svg width="48" height="40"><rect x="13.500" y="12.500" width="15" height="15" {...stroke} /><Chevron /></svg>
      <svg width="48" height="40">
        <path d="m13.500 12.500 9.500 2.500c3 1 4 4 3.700 7.500l1.800 1.500-4 3.500-1.500-1.500c-3.500.3-6-1-7-4Z" {...stroke} />
        <path d="m14 13 6 6.500" {...stroke} />
        <circle cx="20.800" cy="20.200" r="1.600" {...stroke} />
        <Chevron />
      </svg>
      <svg width="39" height="40"><path d="M13.500 15.500v-3h12v3M19.500 12.500v15M16.500 27.500h6" {...stroke} /></svg>
      <svg width="40" height="40">
        <path d="M15.500 23.500v-8c0-2 2.500-2 2.500 0v4.500V13c0-2 2.800-2 2.800 0v7-7.500c0-1.800 2.700-1.800 2.700 0V20v-5.500c0-1.800 2.500-1.800 2.500 0V22c0 3.500-1.500 7.500-5.500 7.500-3.500 0-5-1.500-6.500-4.500l-2-3.500c-.8-1.800 1-2.800 2-1.500Z" transform="translate(1 -1)" {...stroke} />
      </svg>
      <svg width="40" height="40"><path d="M12 27.500c1.500-1.500 1.800-3 1.200-4.800-1.800-5 1.500-10.200 7-10.200 5 0 8.300 3.500 8.300 7.500s-3.200 7.500-8.300 7.500Z" {...stroke} /></svg>

      <div className="absolute left-[820px] flex h-10 items-center text-[14px]">
        <Fit w={40} className="font-['Roboto'] text-[#9a9a9a]">Drafts</Fit>
        <svg className="ml-[6px]" width="7" height="16" viewBox="0 0 7 16"><path d="M.5 15.500 6.500.5" stroke="#6f6f6f" /></svg>
        <Fit w={131} className="ml-[6px] text-white">portfolio checkpoint</Fit>
        <svg className="ml-[6px]" width="6" height="4" viewBox="0 0 6 4"><path d="m.3.500 2.700 2.700L5.700.5" fill="none" stroke="#fff" strokeWidth="1.100" /></svg>
      </div>

      <div className="ml-auto flex items-center pr-[14px]">
        <Cell className="h-6 w-6 rounded-full bg-[#12a958] text-[12px] text-white">F</Cell>
        <Cell className="ml-[21px] h-[30px] w-[54px] rounded-md bg-[#18a0fb] text-[11px] font-medium text-white"><Fit w={30}>Share</Fit></Cell>
        <svg className="ml-[22px]" width="10" height="13" viewBox="0 0 10 13"><path d="M.8 1v11l8.200-5.500Z" {...stroke} strokeWidth={1.100} /></svg>
        <Fit w={22} className="ml-[28px] text-[11px] text-[#c8c8c8]">80%</Fit>
        <svg className="ml-[6px]" width="7" height="5" viewBox="0 0 7 5"><path d="m.5.700 3 3 3-3" fill="none" stroke="#c8c8c8" /></svg>
      </div>
    </div>
  );
}

function LeftPanel() {
  return (
    <section className="flex w-60 shrink-0 flex-col bg-white text-[11px] leading-4 text-[#333]">
      <div className="flex h-[41px] items-center border-b border-[#e5e5e5] pl-4">
        <Fit w={35} className="font-semibold">Layers</Fit>
        <Fit w={36} className="ml-4 text-[#b3b3b3]">Assets</Fit>
        <Fit w={83} className="ml-[32px]">graphique cha...</Fit>
        <svg className="ml-[7px]" width="7" height="5" viewBox="0 0 7 5"><path d="m.5 4.300 3-3 3 3" fill="none" stroke="#b0b0b0" /></svg>
      </div>
      <div className="flex h-[36px] items-end justify-between pl-4 pr-[19px]">
        <Fit w={33} className="mb-2 font-semibold">Pages</Fit>
        <svg className="mb-[11px]" width="11" height="11" viewBox="0 0 11 11"><path d="M5.500 0v11M0 5.500h11" stroke="#222" /></svg>
      </div>
      <div className="flex h-8 items-center pl-5">
        <svg width="8" height="7" viewBox="0 0 8 7"><path d="m.8 3.200 2.200 2.300L7.200.8" fill="none" stroke="#111" strokeWidth="1.800" /></svg>
        <Fit w={90} className="ml-3 font-medium">graphique charte</Fit>
      </div>
      <div className="flex h-8 items-center pl-10"><Fit w={31}>Home</Fit></div>
      <div className="flex h-8 items-center pl-10"><Fit w={50}>About me</Fit></div>
      <div className="flex h-[48px] items-center border-b border-[#e5e5e5] pb-[15px] pl-10"><Fit w={35}>Assets</Fit></div>
      <div className="flex h-8 items-center pl-[18px]">
        <svg width="12" height="12" viewBox="0 0 12 12"><path d="M3.500 0v12M8.500 0v12M0 3.500h12M0 8.500h12" stroke="#222" /></svg>
        <Fit w={61} className="ml-2.5 font-semibold">Desktop - 1</Fit>
      </div>
    </section>
  );
}

function RightPanel() {
  return (
    <section className="flex w-60 shrink-0 flex-col bg-white text-[11px] leading-4 text-[#333]">
      <div className="flex h-[41px] items-center border-b border-[#e5e5e5] pl-4">
        <Fit w={37} className="font-semibold">Design</Fit>
        <Fit w={52} className="ml-4 text-[#b3b3b3]">Prototype</Fit>
        <Fit w={39} className="ml-[15px] text-[#b3b3b3]">Inspect</Fit>
      </div>
      <div className="flex h-[81px] flex-col border-b border-[#e5e5e5] pl-4">
        <Fit w={64} className="mt-4 self-start font-semibold">Background</Fit>
        <div className="mt-4 flex items-center">
          <div className="h-4 w-4 bg-[#e5e5e5]" />
          <Fit w={40} className="ml-2">E5E5E5</Fit>
          <Fit w={28} className="ml-8">100%</Fit>
          <svg className="ml-auto mr-[17px]" width="14" height="9" viewBox="0 0 14 9">
            <path d="M.7 4.500C3.500-.3 10.500-.3 13.300 4.500 10.500 9.300 3.500 9.300.7 4.500Z" fill="none" stroke="#222" />
            <circle cx="7" cy="4.500" r="2" fill="#222" />
          </svg>
        </div>
      </div>
      <div className="flex h-[49px] items-center justify-between border-b border-[#e5e5e5] pl-4 pr-[19px] text-[#b3b3b3]">
        <Fit w={35} className="font-semibold">Export</Fit>
        <svg width="11" height="11" viewBox="0 0 11 11"><path d="M5.500 0v11M0 5.500h11" stroke="#b3b3b3" /></svg>
      </div>
    </section>
  );
}

function Swatch({ row, name, hex, hexWidth = 47 }: { row: string; name: string; hex: string; hexWidth?: number }) {
  return (
    <div className={`flex flex-1 items-center justify-between pl-3 pt-px ${row}`}>
      <Fit w={20.500}>{name}</Fit>
      <div className="w-[60px]"><Fit w={hexWidth}>{hex}</Fit></div>
    </div>
  );
}

function Palette() {
  return (
    <div className="absolute left-[113px] top-[31px] flex h-[289px] w-[706px] flex-col border-2 border-[#18a0fb] font-['Roboto'] text-[12px] font-medium leading-none text-black/85 shadow-[-1px_1px_0_0_#9fd6fb]">
      <div className="h-[38px] pt-[2px]"><Fit w={57} className="relative -left-px text-[16.500px] leading-none">Primary</Fit></div>
      <div className="flex h-[71px] items-end justify-between bg-[#6200ee] pb-[8px] pl-3">
        <Fit w={71}>Primary I 200</Fit>
        <div className="w-[60px]"><Fit w={47}>#6200EE</Fit></div>
      </div>
      <div className="flex flex-1">
        <div className="flex w-[351px] flex-col border-r border-[#7a45dc] text-white/85">
          <Swatch row="bg-[#23036a]" name="900" hex="#23036A" hexWidth={48} />
          <Swatch row="bg-[#30009c]" name="800" hex="#30009C" hexWidth={48} />
          <Swatch row="bg-[#3700b3]" name="700" hex="#3700B3" hexWidth={48} />
          <Swatch row="bg-[#5600e8]" name="600" hex="#5600E8" />
          <Swatch row="bg-[#6200ee]" name="500" hex="#6200EE" />
        </div>
        <div className="flex flex-1 flex-col">
          <Swatch row="bg-[#7f39fb]" name="400" hex="#7F39FB" />
          <Swatch row="bg-[#985eff]" name="300" hex="#985EFF" />
          <Swatch row="bg-[#bb86fc]" name="200" hex="#BB86FC" hexWidth={49} />
          <Swatch row="bg-[#dbb2ff]" name="100" hex="#DBB2FF" hexWidth={49} />
          <Swatch row="bg-[#f2e7fe]" name="050" hex="#F2E7FE" />
        </div>
      </div>
    </div>
  );
}

function Canvas() {
  return (
    <main className="relative min-w-0 flex-1 overflow-hidden bg-[#e5e5e5]">
      <Fit w={60} className="absolute left-[105px] top-[8px] text-[11px] leading-4 text-[#999]">Desktop - 1</Fit>
      <div className="absolute left-[105px] top-[24px] h-[824px] w-[1158px] border border-[#f2f2f2] bg-white" />
      <Palette />
      <div className="absolute left-[826px] top-[69px] flex flex-col font-['Roboto'] text-[16px] font-medium leading-[18.700px] text-black">
        <Fit w={53} className="self-start">Polices</Fit>
        <Fit w={119} className="mt-[18px] self-start">Title : Electrolize</Fit>
        <Fit w={195.500} className="self-start">segondary title: Montserrat</Fit>
        <Fit w={31.500} className="self-start">text:</Fit>
      </div>
      <svg className="absolute left-[405px] top-[71px]" width="20" height="22" viewBox="0 0 20 22">
        <path d="m1.500 1.500 14 8-7 2.500-3.500 6Z" fill="#000" stroke="#fff" strokeWidth="1.200" />
      </svg>
    </main>
  );
}

export default function App() {
  return (
    <div className="relative flex h-[1080px] w-[1920px] flex-col overflow-hidden bg-white font-['Noto_Sans','Open_Sans',sans-serif]">
      <SystemBar />
      <div className="flex min-h-0 flex-1">
        <Dock />
        <div className="flex min-w-0 flex-1 flex-col">
          <TitleBar />
          <TabStrip />
          <div className="flex h-[70px] shrink-0 flex-col border-b border-[#c2c2c3] bg-[#f9f9fa]">
            <NavBar />
            <BookmarksBar />
          </div>
          <div className="flex min-h-0 flex-1 flex-col font-['Inter',sans-serif]">
            <FigmaToolbar />
            <div className="flex min-h-0 flex-1">
              <LeftPanel />
              <Canvas />
              <RightPanel />
            </div>
          </div>
        </div>
      </div>
      <div className="absolute bottom-6 right-6 flex h-9 w-9 items-center justify-center rounded-full bg-[#2c2c2c] font-['Inter',sans-serif] text-[18px] font-light text-white">?</div>
    </div>
  );
}
